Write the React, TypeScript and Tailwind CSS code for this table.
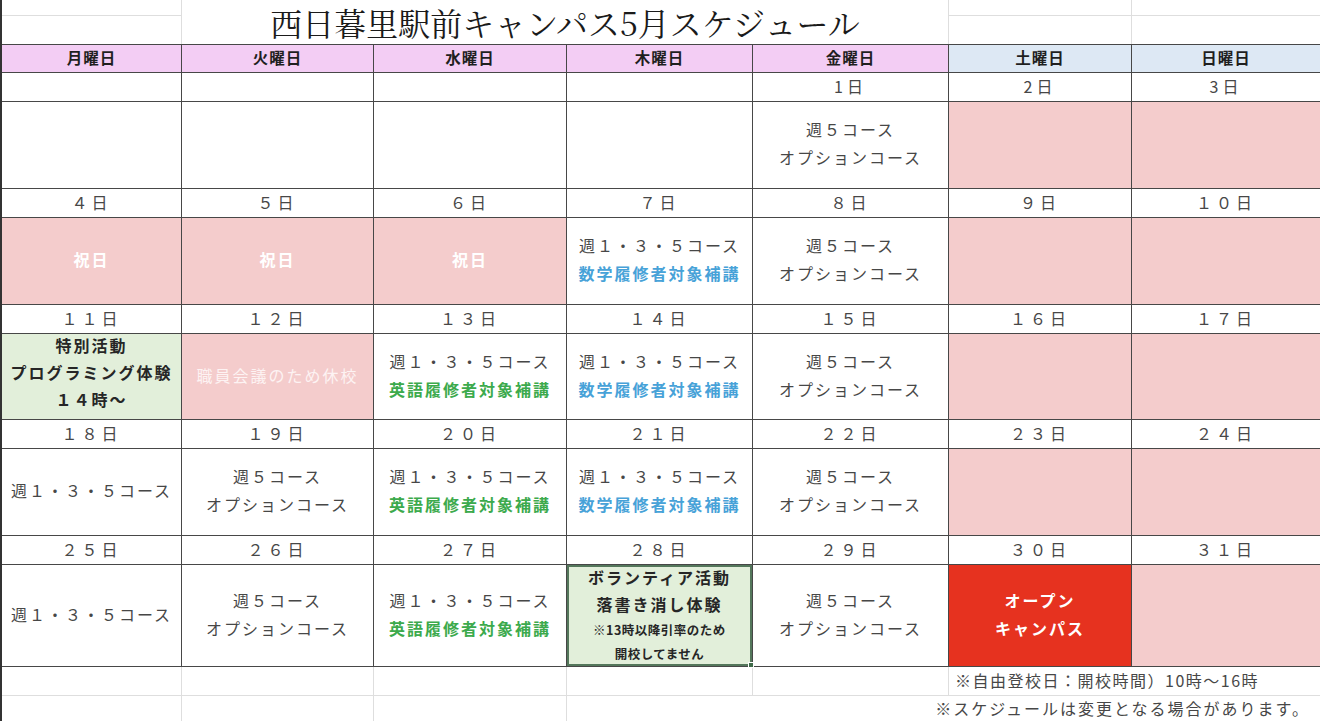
import type { ReactNode } from "react";

type Kind = "plain" | "blue" | "green" | "white" | "whiteThin" | "dark" | "small";
type Line = { t: string; k?: Kind };
type Cell = { bg?: "none" | "pink" | "green" | "red" | "select"; lines?: Line[] };

const COLS = "grid grid-cols-[179px_191px_192px_185px_195px_182px_188px]";

const lineCls: Record<Kind, string> = {
  plain: "text-[16px] leading-[28px] tracking-[2px] text-[#474747]",
  blue: "text-[16px] leading-[28px] tracking-[2px] font-bold text-[#47a2d8]",
  green: "text-[16px] leading-[28px] tracking-[2px] font-bold text-[#3caa4c]",
  white: "text-[16px] leading-[28px] tracking-[2px] font-bold text-white",
  whiteThin: "text-[16px] leading-[28px] tracking-[2px] text-[#fdf3f3]",
  dark: "text-[16px] leading-[27px] tracking-[2px] font-bold text-[#262626]",
  small: "text-[12.5px] leading-[24px] tracking-[0.5px] font-bold text-[#262626]",
};

const bgCls = {
  none: "bg-white pb-[4px]",
  pink: "bg-[#f4cccc] pb-[4px]",
  green: "bg-[#e2efda] pb-[8px]",
  red: "bg-[#e6321f] pb-[4px]",
  select: "bg-[#e2efda] border-2 border-[#54775b] pb-[2px]",
};

const course5: Line[] = [{ t: "週５コース" }, { t: "オプションコース" }];
const math: Line[] = [{ t: "週１・３・５コース" }, { t: "数学履修者対象補講", k: "blue" }];
const eng: Line[] = [{ t: "週１・３・５コース" }, { t: "英語履修者対象補講", k: "green" }];
const c135: Line[] = [{ t: "週１・３・５コース" }];
const holiday: Cell = { bg: "pink", lines: [{ t: "祝日", k: "white" }] };
const pink: Cell = { bg: "pink" };
const empty: Cell = {};

const weeks: { dates: string[]; cells: Cell[] }[] = [
  {
    dates: ["", "", "", "", "1日", "2日", "3日"],
    cells: [empty, empty, empty, empty, { lines: course5 }, pink, pink],
  },
  {
    dates: ["４日", "５日", "６日", "７日", "８日", "９日", "１０日"],
    cells: [holiday, holiday, holiday, { lines: math }, { lines: course5 }, pink, pink],
  },
  {
    dates: ["１１日", "１２日", "１３日", "１４日", "１５日", "１６日", "１７日"],
    cells: [
      {
        bg: "green",
        lines: [
          { t: "特別活動", k: "dark" },
          { t: "プログラミング体験", k: "dark" },
          { t: "１４時～", k: "dark" },
        ],
      },
      { bg: "pink", lines: [{ t: "職員会議のため休校", k: "whiteThin" }] },
      { lines: eng },
      { lines: math },
      { lines: course5 },
      pink,
      pink,
    ],
  },
  {
    dates: ["１８日", "１９日", "２０日", "２１日", "２２日", "２３日", "２４日"],
    cells: [{ lines: c135 }, { lines: course5 }, { lines: eng }, { lines: math }, { lines: course5 }, pink, pink],
  },
  {
    dates: ["２５日", "２６日", "２７日", "２８日", "２９日", "３０日", "３１日"],
    cells: [
      { lines: c135 },
      { lines: course5 },
      { lines: eng },
      {
        bg: "select",
        lines: [
          { t: "ボランティア活動", k: "dark" },
          { t: "落書き消し体験", k: "dark" },
          { t: "※13時以降引率のため", k: "small" },
          { t: "開校してません", k: "small" },
        ],
      },
      { lines: course5 },
      {
        bg: "red",
        lines: [
          { t: "オープン", k: "white" },
          { t: "キャンパス", k: "white" },
        ],
      },
      pink,
    ],
  },
];

const days = [
  { t: "月曜日", bg: "bg-[#f3cdf4]" },
  { t: "火曜日", bg: "bg-[#f3cdf4]" },
  { t: "水曜日", bg: "bg-[#f3cdf4]" },
  { t: "木曜日", bg: "bg-[#f3cdf4]" },
  { t: "金曜日", bg: "bg-[#f3cdf4]" },
  { t: "土曜日", bg: "bg-[#dde8f4]" },
  { t: "日曜日", bg: "bg-[#dde8f4]" },
];

function ContentCell({ cell }: { cell: Cell }) {
  const bg = bgCls[cell.bg ?? "none"];
  return (
    <div className={`relative flex flex-col items-center justify-center whitespace-nowrap ${bg}`}>
      {cell.lines?.map((l, i) => (
        <div key={i} className={lineCls[l.k ?? "plain"]}>
          {l.t}
        </div>
      ))}
      {cell.bg === "select" && (
        <span className="absolute -right-[4px] -bottom-[4px] w-[6px] h-[6px] bg-[#3f6b4a] border border-white" />
      )}
    </div>
  );
}

function Blank({ children, className = "" }: { children?: ReactNode; className?: string }) {
  return <div className={`bg-white ${className}`}>{children}</div>;
}

export default function App() {
  return (
    <div className="w-[1320px] h-[721px] overflow-hidden bg-white border-l-2 border-[#333] font-['Noto_Sans_CJK_JP',sans-serif]">
      {/* title rows */}
      <div className={`${COLS} grid-rows-[15px_28px] gap-px bg-[#dedede]`}>
        <Blank className="col-start-1 row-start-1" />
        <Blank className="col-start-1 row-start-2" />
        <div className="col-start-2 col-span-4 row-start-1 row-span-2 bg-white flex items-center justify-center font-['Noto_Serif_CJK_JP','Noto_Sans_CJK_JP',serif] text-[32px] leading-[42px] text-[#1a1a1a] whitespace-nowrap">
          西日暮里駅前キャンパス5月スケジュール
        </div>
        <Blank className="col-start-6 row-start-1" />
        <Blank className="col-start-6 row-start-2" />
        <Blank className="col-start-7 row-start-1" />
        <Blank className="col-start-7 row-start-2" />
      </div>

      {/* calendar */}
      <div
        className={`${COLS} grid-rows-[27px_28px_86px_28px_86px_28px_85px_28px_86px_28px_101px] gap-px bg-[#474747] border-y border-[#474747]`}
      >
        {days.map((d) => (
          <div
            key={d.t}
            className={`flex items-center justify-center pb-[2px] text-[15.5px] font-bold tracking-[1px] text-[#1f1f1f] ${d.bg}`}
          >
            {d.t}
          </div>
        ))}
        {weeks.map((w, wi) => [
          ...w.dates.map((d, i) => (
            <div
              key={`d${wi}-${i}`}
              className="bg-white flex items-center justify-center pb-[3px] text-[16px] tracking-[4px] text-[#474747]"
            >
              {d}
            </div>
          )),
          ...w.cells.map((c, i) => <ContentCell key={`c${wi}-${i}`} cell={c} />),
        ])}
      </div>

      {/* notes under the table */}
      <div className={`${COLS} grid-rows-[28px_26px] gap-px bg-[#dedede]`}>
        <Blank />
        <Blank />
        <Blank />
        <Blank />
        <Blank />
        <div className="col-span-2 bg-white flex items-center pl-[6px] pb-[2px] text-[16px] tracking-[1.5px] text-[#474747] whitespace-nowrap">
          ※自由登校日：開校時間）10時～16時
        </div>
        <Blank />
        <Blank />
        <Blank />
        <div className="col-span-4 bg-white flex items-center justify-end pr-[10px] pb-[3px] text-[16px] tracking-[2px] text-[#474747] whitespace-nowrap">
          ※スケジュールは変更となる場合があります。
        </div>
      </div>
    </div>
  );
}
